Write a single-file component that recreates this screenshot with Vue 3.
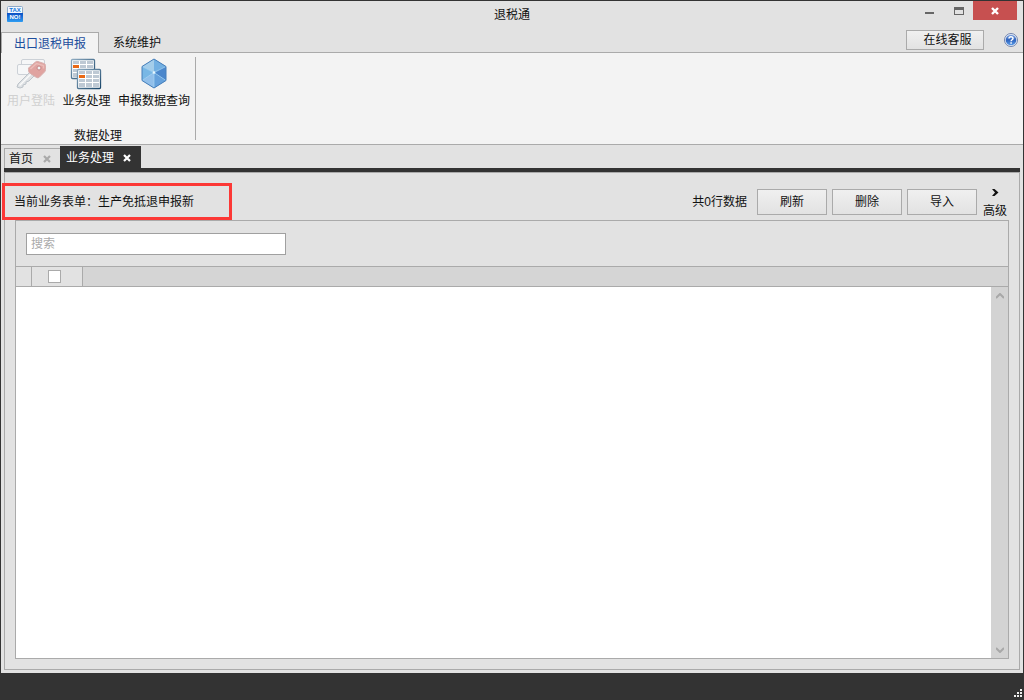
<script setup>
import { ref } from 'vue'

const keyword = ref('')
const allChecked = ref(false)
const actions = ['刷新', '删除', '导入']
</script>

<template>
  <div class="window">
    <header class="titlebar">
      <svg class="logo" viewBox="0 0 16 16" width="16" height="16" aria-hidden="true">
        <defs>
          <linearGradient id="logoBlue" x1="0" y1="0" x2="0" y2="1">
            <stop offset="0" stop-color="#0a4fc4" />
            <stop offset="1" stop-color="#2f9df2" />
          </linearGradient>
        </defs>
        <rect x="0.5" y="0.5" width="15" height="15" rx="1" fill="#f2f8ff" stroke="#8faac8" />
        <path d="M0 7h16v8a1 1 0 0 1-1 1H1a1 1 0 0 1-1-1z" fill="url(#logoBlue)" />
        <text x="8" y="6" class="logo-top">TAX</text>
        <text x="8" y="13" class="logo-bottom">NO!</text>
      </svg>
      <h1 class="title">退税通</h1>
      <div class="window-controls">
        <button class="control" type="button" aria-label="最小化">
          <svg viewBox="0 0 10 10" width="10" height="10"><path d="M0 6h9v2H0z" fill="#666" /></svg>
        </button>
        <button class="control" type="button" aria-label="最大化">
          <svg viewBox="0 0 10 10" width="10" height="10"><path d="M0 1h10v8H0zM1 4v4h8V4z" fill="#666" fill-rule="evenodd" /></svg>
        </button>
        <button class="control close" type="button" aria-label="关闭">
          <svg viewBox="0 0 8 8" width="8" height="8"><path d="M1 1l6 6M7 1L1 7" stroke="#fff" stroke-width="2.4" /></svg>
        </button>
      </div>
    </header>

    <nav class="ribbon-tabs">
      <button class="ribbon-tab active" type="button">出口退税申报</button>
      <button class="ribbon-tab" type="button">系统维护</button>
      <button class="service" type="button">在线客服</button>
      <button class="help" type="button" aria-label="帮助">
        <svg viewBox="0 0 14 14" width="14" height="14">
          <defs>
            <linearGradient id="helpBlue" x1="0" y1="0" x2="0" y2="1">
              <stop offset="0" stop-color="#7fa5e0" />
              <stop offset="0.5" stop-color="#2d62bd" />
              <stop offset="1" stop-color="#5d9ee8" />
            </linearGradient>
          </defs>
          <circle cx="7" cy="7" r="6.5" fill="#e8eef8" stroke="#7183ad" />
          <circle cx="7" cy="7" r="5.3" fill="url(#helpBlue)" />
          <path d="M5 5.600C5 3.200 9 3.200 9 5.400C9 6.800 7.100 6.700 7.100 8.300M7.100 9.300v1.500" fill="none" stroke="#fff" stroke-width="1.5" />
        </svg>
      </button>
    </nav>

    <section class="ribbon">
      <div class="ribbon-group">
        <div class="tools">
          <button class="tool login" type="button" disabled>
            <svg viewBox="0 0 32 32" width="32" height="32">
              <rect x="6.500" y="1.500" width="23" height="11" rx="1.500" fill="#f6f7f8" stroke="#ccd1d7" />
              <rect x="2.500" y="6.500" width="23" height="10" rx="1.500" fill="#f6f7f8" stroke="#ccd1d7" />
              <path d="M15 14L3 26l-1 3 3 1 3-1v-2l3-1v-2l3-1 5-5z" fill="#dfe2e5" stroke="#bcc3c9" />
              <path d="M4.500 27.500L16 16" stroke="#fafafa" stroke-width="1.5" />
              <path d="M13.500 11.500q-.5-1.500 1-2.500l6-5q1-1 2.500-.5l6 2q1.500.5 1.500 2l0 4q0 1.500-1 2.500l-5 5q-1.500 1.500-3 .5l-7-4.500q-1-1-1-3.500z" fill="#e0a3a0" stroke="#d8b0ae" />
              <path d="M15.500 11l6-5.500 7 2v3" fill="none" stroke="#eabdb9" stroke-width="1.5" />
              <circle cx="24" cy="10" r="2" fill="#f2f2f2" stroke="#c68787" />
            </svg>
            <span>用户登陆</span>
          </button>
          <button class="tool business" type="button">
            <svg viewBox="0 0 32 32" width="32" height="32">
              <defs>
                <linearGradient id="sheetEdge" x1="0" y1="0" x2="1" y2="1">
                  <stop offset="0" stop-color="#8eabc1" />
                  <stop offset="1" stop-color="#174468" />
                </linearGradient>
                <g id="sheet">
                  <rect x="0.5" y="0.5" width="23" height="19" rx="1" fill="#fff" stroke="url(#sheetEdge)" stroke-width="1.3" />
                  <path d="M2 2h6v3H2zM9 2h6v3H9zM16 2h6v3h-6zM9 6h6v3H9zM16 6h6v3h-6zM2 10h6v3H2zM9 10h6v3H9zM16 10h6v3h-6zM2 14h6v4H2zM9 14h6v4H9zM16 14h6v4h-6z" fill="#bec9d4" />
                  <path d="M2 6h6v3H2z" fill="#e96815" />
                </g>
              </defs>
              <use href="#sheet" x="1" y="1" />
              <use href="#sheet" x="7" y="11" />
            </svg>
            <span>业务处理</span>
          </button>
          <button class="tool query" type="button">
            <svg viewBox="0 0 32 32" width="32" height="32">
              <path d="M16 1L28 8.500v14L16 30 4 22.500v-14z" fill="#69a7de" />
              <path d="M16 1L4 8.500l12 6z" fill="#a4cdea" />
              <path d="M16 1l12 7.500-12 6z" fill="#73b0e2" />
              <path d="M4 8.500v14l12-8z" fill="#78b7e5" />
              <path d="M28 8.500v14l-12-8z" fill="#4b87cc" />
              <path d="M4 22.500L16 30V14.500z" fill="#91bfea" />
              <path d="M28 22.500L16 30V14.500z" fill="#65a1dc" />
              <path d="M4 8.500l12 6 12-6M16 14.500V30M4 22.500l12-8 12 8" fill="none" stroke="#a9d5f3" stroke-width="0.7" />
              <path d="M16 1L28 8.500v14L16 30 4 22.500v-14z" fill="none" stroke="#477fba" />
              <circle cx="16" cy="14.500" r="1.300" fill="#e7f8ff" />
            </svg>
            <span>申报数据查询</span>
          </button>
        </div>
        <div class="group-name">数据处理</div>
      </div>
    </section>

    <main class="workspace">
      <nav class="doc-tabs">
        <div class="doc-tab home">
          <button type="button">首页</button>
          <button class="tab-close" type="button" aria-label="关闭首页">
            <svg viewBox="0 0 8 8" width="8" height="8"><path d="M1 1l6 6M7 1L1 7" stroke="currentColor" stroke-width="2.2" /></svg>
          </button>
        </div>
        <div class="doc-tab current">
          <button type="button">业务处理</button>
          <button class="tab-close" type="button" aria-label="关闭业务处理">
            <svg viewBox="0 0 8 8" width="8" height="8"><path d="M1 1l6 6M7 1L1 7" stroke="currentColor" stroke-width="2.2" /></svg>
          </button>
        </div>
      </nav>

      <section class="panel">
        <div class="toolbar">
          <div class="form-name">当前业务表单：生产免抵退申报新</div>
          <span class="count">共0行数据</span>
          <button v-for="action in actions" :key="action" class="action" type="button">{{ action }}</button>
          <button class="advanced" type="button">
            <svg viewBox="0 0 8 8" width="8" height="8"><path d="M1 1h2.500L7.500 4.500 3.500 8H1l3-3.500z" fill="#111" /></svg>
            <span>高级</span>
          </button>
        </div>

        <div class="grid">
          <div class="search">
            <input v-model="keyword" type="text" placeholder="搜索" aria-label="搜索" />
          </div>
          <table>
            <thead>
              <tr>
                <th class="indicator"></th>
                <th class="select"><input v-model="allChecked" type="checkbox" aria-label="全选" /></th>
                <th></th>
              </tr>
            </thead>
          </table>
          <div class="rows">
            <div class="scrollbar">
              <button type="button" aria-label="向上滚动">
                <svg viewBox="0 0 8 6" width="8" height="6"><path d="M0 5l4-4 4 4" fill="none" stroke="#a8a8a8" stroke-width="2" /></svg>
              </button>
              <button type="button" aria-label="向下滚动">
                <svg viewBox="0 0 8 6" width="8" height="6"><path d="M0 1l4 4 4-4" fill="none" stroke="#a8a8a8" stroke-width="2" /></svg>
              </button>
            </div>
          </div>
        </div>
      </section>
    </main>

    <footer class="statusbar">
      <svg viewBox="0 0 8 8" width="8" height="8" aria-hidden="true"><path d="M6 0h2v2H6zM3 3h2v2H3zM6 3h2v2H6zM0 6h2v2H0zM3 6h2v2H3zM6 6h2v2H6z" fill="#eee" /></svg>
    </footer>
  </div>
</template>

<style>
body {
  margin: 0;
}
</style>

<style scoped>
* {
  box-sizing: border-box;
}
.window {
  display: flex;
  flex-direction: column;
  height: 100vh;
  border: 1px solid #333;
  border-bottom: 0;
  background: #e2e2e2;
  color: #111;
  font: 12px/16px "Liberation Sans", "Noto Sans CJK SC", sans-serif;
}
button {
  margin: 0;
  padding: 0;
  border: 0;
  background: none;
  color: inherit;
  font: inherit;
  white-space: nowrap;
}
svg {
  display: block;
  flex: none;
}
.titlebar {
  display: grid;
  grid-template-columns: 1fr auto 1fr;
  height: 29px;
  padding: 0 6px;
}
.logo {
  margin-top: 5px;
}
.logo text {
  font: bold 6px "Liberation Sans", sans-serif;
  text-anchor: middle;
}
.logo .logo-top {
  fill: #1477dc;
}
.logo .logo-bottom {
  fill: #fff;
}
.title {
  margin: 6px 0 0;
  font-size: 12px;
  font-weight: normal;
  line-height: 16px;
}
.window-controls {
  display: flex;
  justify-content: flex-end;
}
.control {
  display: grid;
  place-items: center;
  width: 29px;
  height: 19px;
}
.close {
  width: 44px;
  background: #c75050;
}
.ribbon-tabs {
  display: flex;
  align-items: flex-end;
  height: 23px;
  flex: none;
  padding-right: 5px;
  border-bottom: 1px solid #aaa;
}
.ribbon-tab {
  height: 20px;
  padding: 2px 14px 0;
}
.ribbon-tab.active {
  height: 21px;
  margin-bottom: -1px;
  padding: 1px 12px 0;
  border: 1px solid #aaa;
  border-bottom: 0;
  background: #f3f3f3;
  color: #1e4e9d;
}
.service {
  width: 78px;
  height: 20px;
  margin: 0 20px 2px auto;
  padding-left: 5px;
  border: 1px solid #aaa;
  background: linear-gradient(#f0f0f0, #e2e2e2);
}
.help {
  margin-bottom: 5px;
}
.ribbon {
  height: 92px;
  flex: none;
  padding-top: 4px;
  border-bottom: 1px solid #aaa;
  background: #f3f3f3;
}
.ribbon-group {
  display: flex;
  flex-direction: column;
  justify-content: space-between;
  width: 195px;
  height: 83px;
  border-right: 1px solid #aaa;
}
.tools {
  display: flex;
  justify-content: space-between;
  padding: 1px 5px 0 6px;
}
.tool {
  display: flex;
  flex-direction: column;
  align-items: center;
  gap: 3px;
}
.tool:disabled {
  color: #d0d0d0;
}
.group-name {
  line-height: 8px;
  text-align: center;
}
.workspace {
  display: flex;
  flex: 1;
  flex-direction: column;
  min-height: 0;
  padding: 1px 3px 3px;
}
.doc-tabs {
  display: flex;
  align-items: flex-end;
  height: 26px;
  flex: none;
  border-bottom: 4px solid #333;
}
.doc-tab {
  display: flex;
  align-items: center;
}
.home {
  gap: 10px;
  width: 56px;
  height: 20px;
  padding-left: 4px;
  border: 1px solid #aaa;
  border-width: 1px 0 0 1px;
}
.home .tab-close {
  color: #aaa;
}
.current {
  gap: 9px;
  width: 81px;
  height: 22px;
  padding: 2px 0 0 6px;
  background: #333;
  color: #fff;
}
.panel {
  display: flex;
  flex: 1;
  flex-direction: column;
  min-height: 0;
  padding: 0 10px 10px;
  border: 1px solid #aaa;
}
.toolbar {
  position: relative;
  display: flex;
  align-items: center;
  height: 47px;
  flex: none;
  gap: 5px;
  padding-top: 10px;
}
.form-name {
  position: absolute;
  top: 10px;
  left: -13px;
  width: 230px;
  height: 37px;
  padding: 8px 9px;
  border: 3px solid #fc3836;
}
.count {
  margin: 0 5px 0 auto;
}
.action {
  width: 70px;
  height: 26px;
  border: 1px solid #aaa;
  background: linear-gradient(#f0f0f0, #e2e2e2);
}
.advanced {
  display: flex;
  flex-direction: column;
  align-items: center;
  gap: 7px;
  padding: 3px 2px 0 1px;
}
.action + .advanced {
  margin-right: 0;
}
.grid {
  display: flex;
  flex: 1;
  flex-direction: column;
  min-height: 0;
  border: 1px solid #aaa;
}
.search {
  padding: 12px 10px 11px;
}
.search input {
  display: block;
  width: 260px;
  height: 22px;
  padding: 0 4px;
  border: 1px solid #a0a0a0;
  border-radius: 0;
  outline: 0;
  background: #fff;
  font: inherit;
}
.search input::placeholder {
  color: #aaa;
}
table {
  width: 100%;
  height: 21px;
  border-collapse: separate;
  border-spacing: 0;
  table-layout: fixed;
}
th {
  height: 21px;
  padding: 0;
  border: 1px solid #aaa;
  border-width: 1px 0;
  background: #d5d5d5;
  line-height: 13px;
}
.indicator,
.select {
  border-right-width: 1px;
  background: #e2e2e2;
}
.indicator {
  width: 16px;
}
.select {
  width: 51px;
}
.select input {
  display: block;
  width: 13px;
  height: 13px;
  margin: 0 16px;
  border: 1px solid #aaa;
  appearance: none;
  background: #fff;
}
.select input:checked {
  background: #777;
}
.rows {
  display: flex;
  flex: 1;
  justify-content: flex-end;
  background: #fff;
}
.scrollbar {
  display: flex;
  flex-direction: column;
  justify-content: space-between;
  width: 17px;
  background: #d3d3d3;
}
.scrollbar button {
  display: grid;
  place-items: center;
  height: 17px;
}
.statusbar {
  display: flex;
  align-items: flex-end;
  justify-content: flex-end;
  height: 27px;
  flex: none;
  padding: 0 1px 3px;
  background: #333;
}
</style>
